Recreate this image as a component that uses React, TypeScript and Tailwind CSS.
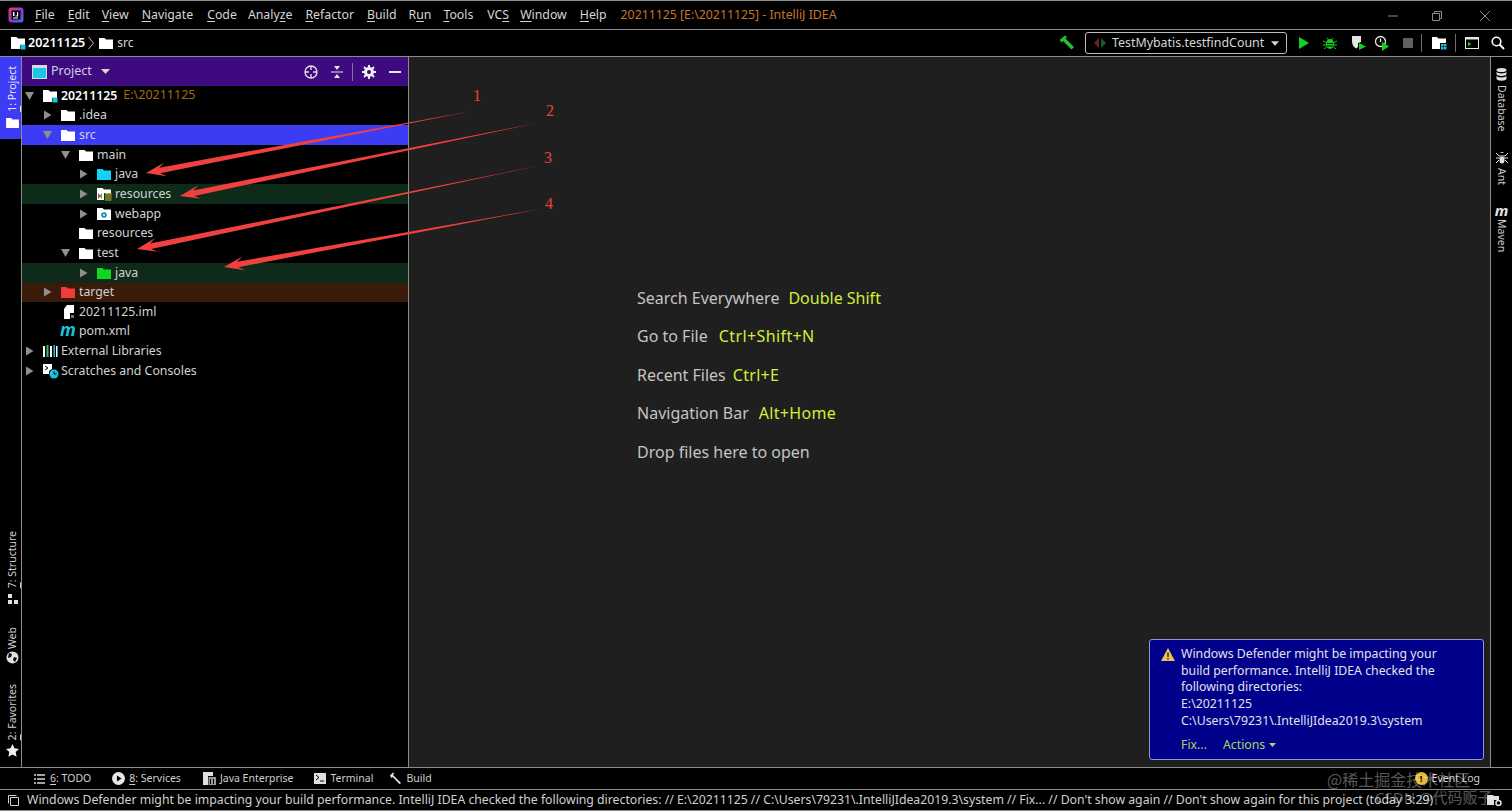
import type { ReactNode } from "react";

const FONT = "font-['Noto_Sans','Open_Sans',sans-serif]";

function Folder({ color = "#ffffff", className = "" }: { color?: string; className?: string }) {
  return (
    <svg viewBox="0 0 14 12" width="14" height="12" className={className}>
      <path d="M0 1h5.500l1.500 1.600H14V12H0z" fill={color} />
    </svg>
  );
}

function ModuleFolder() {
  return (
    <svg viewBox="0 0 15 14" width="15" height="14">
      <path d="M0 1h5.500l1.500 1.600H14V9H9v4H0z" fill="#fff" />
      <rect x="9.500" y="8.500" width="5" height="5" fill="#19c3dc" />
    </svg>
  );
}

function Twisty({ open }: { open: boolean }) {
  return (
    <svg viewBox="0 0 10 10" width="10" height="10" className="ml-[1px]">
      {open ? <path d="M0 1h9L4.500 9z" fill="#8f8f8f" /> : <path d="M1 0.500v9L8.500 5z" fill="#8f8f8f" />}
    </svg>
  );
}

const Mnemonic = ({ pre = "", k, post = "" }: { pre?: string; k: string; post?: string }) => (
  <span>
    {pre}
    <span className="underline underline-offset-2">{k}</span>
    {post}
  </span>
);

const menus: [string, string, string, string][] = [
  ["", "F", "ile", "ml-[11px]"],
  ["", "E", "dit", "ml-[13px]"],
  ["", "V", "iew", "ml-[12px]"],
  ["", "N", "avigate", "ml-[13px]"],
  ["", "C", "ode", "ml-[14px]"],
  ["Analy", "z", "e", "ml-[11px]"],
  ["", "R", "efactor", "ml-[13px]"],
  ["", "B", "uild", "ml-[13px]"],
  ["R", "u", "n", "ml-[12px]"],
  ["", "T", "ools", "ml-[12px]"],
  ["VC", "S", "", "ml-[14px]"],
  ["", "W", "indow", "ml-[11px]"],
  ["", "H", "elp", "ml-[13px]"],
];

function MenuBar() {
  return (
    <div className="flex h-[28px] shrink-0 items-center bg-black pl-[8px] pt-[1px] text-[12.300px] text-[#d6d6d6]">
      <svg viewBox="0 0 16 16" width="16" height="16" className="mb-[2px]">
        <defs>
          <linearGradient id="ij" x1="0" y1="0" x2="1" y2="1">
            <stop offset="0" stopColor="#f0326e" />
            <stop offset="0.600" stopColor="#7b3fd8" />
            <stop offset="1" stopColor="#2f7be0" />
          </linearGradient>
        </defs>
        <rect x="0.500" y="0.500" width="15" height="15" rx="3" fill="url(#ij)" />
        <rect x="3.500" y="3.500" width="9" height="9" fill="#000" />
        <rect x="5" y="10.500" width="5" height="1" fill="#fff" />
        <rect x="5" y="5" width="1.500" height="4" fill="#fff" />
        <path d="M7.500 8.500h1.500V5h1.200v4.500H7.500z" fill="#fff" />
      </svg>
      {menus.map(([pre, k, post, ml]) => (
        <span key={k + post} className={ml}>
          <Mnemonic pre={pre} k={k} post={post} />
        </span>
      ))}
      <span className="ml-[14px] text-[#c4762c]">20211125 [E:\20211125] - IntelliJ IDEA</span>
      <div className="ml-auto flex items-center text-[#8a8a8a]">
        <svg width="12" height="12" viewBox="0 0 12 12"><path d="M1 6h10" stroke="currentColor" /></svg>
        <svg width="12" height="12" viewBox="0 0 12 12" className="ml-[32px]">
          <path d="M1.500 3.500h7v7h-7zM3.500 3.500v-2h7v7h-2" stroke="currentColor" fill="none" />
        </svg>
        <svg width="12" height="12" viewBox="0 0 12 12" className="ml-[36px] mr-[21px]">
          <path d="M1 1l10 10M11 1L1 11" stroke="currentColor" />
        </svg>
      </div>
    </div>
  );
}

function NavBar() {
  return (
    <div className="flex h-[28px] shrink-0 items-center border-y border-[#8c8c8c] bg-black pl-[11px] text-[#d6d6d6]">
      <ModuleFolder />
      <span className="ml-[2px] text-[12.500px] font-semibold text-white">20211125</span>
      <svg width="6" height="14" viewBox="0 0 6 14" className="ml-[3px]">
        <path d="M0.500 1l5 6-5 6" stroke="#bdbdbd" fill="none" />
      </svg>
      <Folder className="ml-[5px]" />
      <span className="ml-[4px] text-[12px]">src</span>
      <div className="ml-auto flex items-center">
        <svg width="16" height="16" viewBox="0 0 16 16">
          <path d="M0.500 5L6 0.500l2 1.500-1.500 1.500L15 12l-2.500 2.500L4 6 2.500 7.500z" fill="#22c02a" />
        </svg>
        <div className="ml-[10px] flex h-[22px] w-[202px] items-center rounded-[3px] border border-[#bcbcbc] pl-[8px]">
          <svg width="12" height="10" viewBox="0 0 12 10">
            <path d="M5 0v10L0 5z" fill="#6e1f1f" />
            <path d="M7 0v10l5-5z" fill="#155c2a" />
          </svg>
          <span className="ml-[6px] text-[12.400px]">TestMybatis.testfindCount</span>
          <svg width="8" height="5" viewBox="0 0 9 5" className="ml-auto mr-[7px]"><path d="M0 0h9L4.500 5z" fill="#d6d6d6" /></svg>
        </div>
        <svg width="12" height="12" viewBox="0 0 12 12" className="ml-[11px]"><path d="M1 0v12l10-6z" fill="#14d01e" /></svg>
        <svg width="14" height="14" viewBox="0 0 14 14" className="ml-[13px]">
          <ellipse cx="7" cy="8" rx="4" ry="5" fill="#14d01e" />
          <path d="M0 5l3 1.500M14 5l-3 1.500M0 9h3M14 9h-3M1 13l2.500-2M13 13l-2.500-2M4 2l1.500 2M10 2L8.500 4" stroke="#14d01e" />
          <path d="M4 7.500h6M4 10h6" stroke="#000" />
        </svg>
        <svg width="16" height="16" viewBox="0 0 16 16" className="ml-[14px]">
          <path d="M1 1h9v6l-3 1v4l-2 1.500C2 12 1 9 1 6z" fill="#e6e6e6" />
          <path d="M8 8v7l7-3.500z" fill="#14d01e" />
        </svg>
        <svg width="17" height="17" viewBox="0 0 17 17" className="ml-[7px]">
          <circle cx="6.500" cy="6.500" r="5" stroke="#e6e6e6" strokeWidth="1.300" fill="none" />
          <path d="M6.500 3.500v3.500" stroke="#e6e6e6" strokeWidth="1.300" />
          <path d="M8 7v9l7-4.500z" fill="#14d01e" />
        </svg>
        <div className="ml-[12px] h-[10px] w-[10px] bg-[#5f5f5f]" />
        <div className="ml-[8px] h-[18px] w-px bg-[#6e6e6e]" />
        <svg width="15" height="14" viewBox="0 0 15 14" className="ml-[10px]">
          <path d="M0 1h5l1.500 1.600H14V7H8v6H0z" fill="#fff" />
          <rect x="9" y="8" width="2.500" height="2.500" fill="#19c3dc" />
          <rect x="12" y="8" width="2.500" height="2.500" fill="#19c3dc" />
          <rect x="9" y="11" width="2.500" height="2.500" fill="#19c3dc" />
          <rect x="12" y="11" width="2.500" height="2.500" fill="#19c3dc" />
        </svg>
        <div className="ml-[8px] h-[18px] w-px bg-[#6e6e6e]" />
        <svg width="14" height="12" viewBox="0 0 14 12" className="ml-[9px]">
          <rect x="0.500" y="0.500" width="13" height="11" fill="none" stroke="#e6e6e6" />
          <rect x="0.500" y="0.500" width="13" height="2" fill="#e6e6e6" />
          <path d="M3 5v4l3.500-2z" fill="#14d01e" />
        </svg>
        <svg width="14" height="14" viewBox="0 0 14 14" className="ml-[12px] mr-[7px]">
          <circle cx="5.500" cy="5.500" r="4.300" fill="none" stroke="#fff" strokeWidth="1.600" />
          <path d="M8.500 8.500L13 13" stroke="#fff" strokeWidth="2" />
        </svg>
      </div>
    </div>
  );
}

function VText({ children, dir = "up" }: { children: ReactNode; dir?: "up" | "down" }) {
  return (
    <span
      className={
        dir === "up"
          ? "block rotate-180 text-[10.500px] leading-none [writing-mode:vertical-rl]"
          : "block text-[10.500px] leading-none [writing-mode:vertical-rl]"
      }
    >
      {children}
    </span>
  );
}

function LeftStrip() {
  return (
    <div className="flex w-[22px] shrink-0 flex-col justify-between border-r border-[#8c8c8c] bg-black text-[#d0d0d0]">
      <div className="flex h-[82px] flex-col items-center justify-end bg-[#3c3cf5] pb-[11px] pl-[3px] text-[#e6e6f0]">
        <VText>
          <Mnemonic k="1" post=": Project" />
        </VText>
        <Folder className="mt-[5px] h-[11px] w-[13px]" />
      </div>
      <div className="flex flex-col items-center pb-[10px] pl-[4px]">
        <VText>
          <Mnemonic k="7" post=": Structure" />
        </VText>
        <svg width="12" height="12" viewBox="0 0 12 12" className="mt-[4px]">
          <path d="M1 1h4v4H1zM1 7h4v4H1zM7 7h4v4H7z" fill="#e0e0e0" />
        </svg>
        <div className="mt-[22px]"><VText>Web</VText></div>
        <svg width="13" height="13" viewBox="0 0 13 13" className="mt-[2px]">
          <circle cx="6.500" cy="6.500" r="6" fill="#e0e0e0" />
          <path d="M3 2l3 1-1 3-3 1zM8 6l3 1-2 4-2-2z" fill="#000" />
        </svg>
        <div className="mt-[20px]">
          <VText>
            <Mnemonic k="2" post=": Favorites" />
          </VText>
        </div>
        <svg width="13" height="13" viewBox="0 0 13 13" className="mt-[4px]">
          <path d="M6.500 0l2 4.300 4.500.6-3.300 3.100.9 4.700-4.100-2.300-4.100 2.300.9-4.700L0 4.900l4.500-.6z" fill="#f0f0f0" />
        </svg>
      </div>
    </div>
  );
}

type Row = { label: string; depth: string; twisty?: "open" | "closed"; icon: ReactNode; bg?: string; hint?: string; bold?: boolean };

const rows: Row[] = [
  { label: "20211125", depth: "pl-[2px]", twisty: "open", icon: <ModuleFolder />, hint: "E:\\20211125", bold: true },
  { label: ".idea", depth: "pl-[20px]", twisty: "closed", icon: <Folder /> },
  { label: "src", depth: "pl-[20px]", twisty: "open", icon: <Folder />, bg: "bg-[#3c3cf5]" },
  { label: "main", depth: "pl-[38px]", twisty: "open", icon: <Folder /> },
  { label: "java", depth: "pl-[56px]", twisty: "closed", icon: <Folder color="#10d4f4" /> },
  {
    label: "resources",
    depth: "pl-[56px]",
    twisty: "closed",
    bg: "bg-[#0e2b1a]",
    icon: (
      <svg viewBox="0 0 15 14" width="15" height="14">
        <path d="M0 1h5.500L7 2.600h7V6H7v7H0z" fill="#fff" />
        <path d="M1 6l3 3-3 3z" fill="#e04030" />
        <path d="M5 6L3 9l2 3z" fill="#18b040" />
        <path d="M8 6h6.500v7.500H8z" fill="#b8b040" />
        <path d="M8 8h6.500M8 10h6.500M8 12h6.500" stroke="#000" strokeWidth="0.700" />
      </svg>
    ),
  },
  {
    label: "webapp",
    depth: "pl-[56px]",
    twisty: "closed",
    icon: (
      <svg viewBox="0 0 14 12" width="14" height="12">
        <path d="M0 0h5.500L7 1.600h7V12H0z" fill="#fff" />
        <circle cx="7" cy="7" r="2.800" fill="#1090b0" />
        <circle cx="7" cy="7" r="1" fill="#fff" />
      </svg>
    ),
  },
  { label: "resources", depth: "pl-[38px]", icon: <Folder /> },
  { label: "test", depth: "pl-[38px]", twisty: "open", icon: <Folder /> },
  { label: "java", depth: "pl-[56px]", twisty: "closed", icon: <Folder color="#10d820" />, bg: "bg-[#0e2b1a]" },
  { label: "target", depth: "pl-[20px]", twisty: "closed", icon: <Folder color="#f03c3c" />, bg: "bg-[#3a1a08]" },
  {
    label: "20211125.iml",
    depth: "pl-[20px]",
    icon: (
      <svg viewBox="0 0 12 14" width="12" height="14" className="ml-[2px]">
        <path d="M4 0h7v8H7v6H1V4z" fill="#fff" />
        <rect x="8" y="10" width="3" height="3" fill="#777" />
      </svg>
    ),
  },
  {
    label: "pom.xml",
    depth: "pl-[20px]",
    icon: <span className="-ml-[1px] -mt-[4px] text-[17.500px] font-bold italic leading-none text-[#19c3dc]">m</span>,
  },
  {
    label: "External Libraries",
    depth: "pl-[2px]",
    twisty: "closed",
    icon: (
      <svg viewBox="0 0 15 12" width="15" height="12">
        <path d="M0 1h2v11H0z" fill="#fff" />
        <path d="M3.500 0h2v12h-2z" fill="#2bc45a" />
        <path d="M7 1h2v11H7z" fill="#fff" />
        <path d="M10.500 0h1.500v12h-1.500z" fill="#19c3dc" />
        <path d="M13 1h1.500v11H13z" fill="#fff" />
      </svg>
    ),
  },
  {
    label: "Scratches and Consoles",
    depth: "pl-[2px]",
    twisty: "closed",
    icon: (
      <svg viewBox="0 0 16 15" width="16" height="15">
        <path d="M0 0h9v5l-3 2v3H0z" fill="#fff" />
        <path d="M2 2l3 2-3 2" stroke="#000" fill="none" />
        <circle cx="11" cy="10" r="4.500" fill="#19c3dc" />
        <path d="M11 7.500V10h2.500" stroke="#000" fill="none" />
      </svg>
    ),
  },
];

function ProjectTree() {
  return (
    <div className="flex w-[387px] shrink-0 flex-col border-r border-[#8c8c8c] bg-black">
      <div className="flex h-[29px] shrink-0 items-center bg-[#3e0a80] pl-[10px] text-[#d6d6d6]">
        <svg width="15" height="14" viewBox="0 0 15 14">
          <rect x="0.500" y="0.500" width="14" height="13" fill="#19c8e6" stroke="#d8d8e8" />
          <rect x="0.500" y="0.500" width="14" height="2.500" fill="#d8d8e8" />
        </svg>
        <span className="ml-[4px] text-[12.500px] text-[#d0d0e0]">Project</span>
        <svg width="9" height="5" viewBox="0 0 9 5" className="ml-[9px]"><path d="M0 0h9L4.500 5z" fill="#d6d6d6" /></svg>
        <div className="ml-auto flex items-center">
          <svg width="14" height="14" viewBox="0 0 14 14">
            <circle cx="7" cy="7" r="6" fill="none" stroke="#e6e6e6" strokeWidth="1.300" />
            <path d="M7 1v4M7 9v4M1 7h4M9 7h4" stroke="#e6e6e6" strokeWidth="1.300" />
          </svg>
          <svg width="12" height="14" viewBox="0 0 12 14" className="ml-[13px]">
            <path d="M0 7h12" stroke="#e6e6e6" />
            <path d="M3 1h6L6 5zM3 13h6L6 9z" fill="#e6e6e6" />
          </svg>
          <div className="ml-[9px] h-[18px] w-px bg-[#8070a8]" />
          <svg width="14" height="14" viewBox="0 0 14 14" className="ml-[9px]">
            <circle cx="7" cy="7" r="3.500" fill="none" stroke="#f0f0f0" strokeWidth="3" />
            <path d="M7 0v3M7 11v3M0 7h3M11 7h3M2 2l2 2M10 10l2 2M12 2l-2 2M4 10l-2 2" stroke="#f0f0f0" strokeWidth="2" />
          </svg>
          <div className="ml-[13px] mr-[7px] h-[2px] w-[12px] bg-[#e6e6e6]" />
        </div>
      </div>
      {rows.map((r) => (
        <div key={r.label + r.depth} className={`flex h-[19.670px] items-center text-[12.300px] ${r.depth} ${r.bg ?? ""}`}>
          <div className="flex w-[19px] shrink-0 items-center">{r.twisty && <Twisty open={r.twisty === "open"} />}</div>
          <div className="flex w-[18px] shrink-0 items-center">{r.icon}</div>
          <span className={r.bold ? "font-semibold text-white" : "text-[#d2d2d2]"}>{r.label}</span>
          {r.hint && <span className="ml-[6px] text-[12.500px] text-[#a8661c]">{r.hint}</span>}
        </div>
      ))}
    </div>
  );
}

const hints: { label: string; keys?: string; cls?: string }[] = [
  { label: "Search Everywhere", keys: "Double Shift", cls: "ml-[9px]" },
  { label: "Go to File", keys: "Ctrl+Shift+N", cls: "ml-[11px] tracking-[0.400px]" },
  { label: "Recent Files", keys: "Ctrl+E", cls: "ml-[7px] tracking-[0.300px]" },
  { label: "Navigation Bar", keys: "Alt+Home", cls: "ml-[10px] tracking-[0.300px]" },
  { label: "Drop files here to open" },
];

function Notification() {
  return (
    <div className="absolute bottom-[7px] right-[6px] h-[121px] w-[335px] rounded-[3px] border border-[#8f96d0] bg-[#00008a] pl-[31px] pt-[6px] text-[12.300px] leading-[16.700px] text-[#e2e2ea]">
      <svg width="14" height="13" viewBox="0 0 14 13" className="absolute left-[11px] top-[8px]">
        <path d="M7 0l7 13H0z" fill="#f0c050" />
        <path d="M7 4.500v4.500M7 10v1.500" stroke="#222" strokeWidth="1.400" />
      </svg>
      <p>Windows Defender might be impacting your</p>
      <p>build performance. IntelliJ IDEA checked the</p>
      <p>following directories:</p>
      <p>E:\20211125</p>
      <p>C:\Users\79231\.IntelliJIdea2019.3\system</p>
      <div className="mt-[7px] flex items-center text-[#a8d860]">
        <span>Fix...</span>
        <span className="ml-[16px]">Actions</span>
        <svg width="7" height="4" viewBox="0 0 7 4" className="ml-[4px]"><path d="M0 0h7L3.500 4z" fill="#a8d860" /></svg>
      </div>
    </div>
  );
}

function Editor() {
  return (
    <div className="relative flex min-w-0 flex-1 flex-col gap-[17px] bg-[#1f1f1f] pl-[228px] pt-[230px]">
      {hints.map((h) => (
        <div key={h.label} className="flex h-[21.500px] items-center text-[16px] leading-none text-[#c4c4c4]">
          <span>{h.label}</span>
          {h.keys && <span className={`text-[#d2ee3a] ${h.cls}`}>{h.keys}</span>}
        </div>
      ))}
      <Notification />
    </div>
  );
}

function RightStrip() {
  return (
    <div className="flex w-[22px] shrink-0 flex-col items-center border-l border-[#8c8c8c] bg-black pt-[11px] text-[#cfcfcf]">
      <svg width="11" height="13" viewBox="0 0 11 13">
        <ellipse cx="5.500" cy="2" rx="5" ry="2" fill="#e0e0e0" />
        <path d="M0.500 3.500c0 2.600 10 2.600 10 0V6c0 2.600-10 2.600-10 0zM0.500 7.500c0 2.600 10 2.600 10 0V10.500c0 3-10 3-10 0z" fill="#e0e0e0" />
      </svg>
      <div className="mt-[4px]"><VText dir="down">Database</VText></div>
      <svg width="12" height="13" viewBox="0 0 12 13" className="mt-[19px]">
        <circle cx="6" cy="3" r="2" fill="#e0e0e0" />
        <ellipse cx="6" cy="9" rx="2.500" ry="3.500" fill="#e0e0e0" />
        <path d="M0 2l3 3h6l3-3M0 7h12M0 12l3-3M12 12l-3-3" stroke="#e0e0e0" />
      </svg>
      <div className="mt-[4px]"><VText dir="down">Ant</VText></div>
      <span className="mt-[18px] text-[15px] font-bold italic leading-none text-[#e6e6e6]">m</span>
      <div className="mt-[1px]"><VText dir="down">Maven</VText></div>
    </div>
  );
}

function ToolTabs() {
  return (
    <div className="flex h-[22px] shrink-0 items-center border-t border-[#8c8c8c] bg-black pl-[34px] text-[10.500px] text-[#cfcfcf]">
      <svg width="11" height="10" viewBox="0 0 11 10">
        <path d="M0 1h2M0 5h2M0 9h2M3 1h8M3 5h8M3 9h8" stroke="#d8d8d8" strokeWidth="1.400" />
      </svg>
      <span className="ml-[5px]"><Mnemonic k="6" post=": TODO" /></span>
      <svg width="13" height="13" viewBox="0 0 13 13" className="ml-[21px]">
        <circle cx="6.500" cy="6.500" r="6.500" fill="#e6e6e6" />
        <path d="M5 3.500v6l4.500-3z" fill="#000" />
      </svg>
      <span className="ml-[4px]"><Mnemonic k="8" post=": Services" /></span>
      <svg width="13" height="13" viewBox="0 0 13 13" className="ml-[22px]">
        <path d="M0 0h10v4H5v9H0z" fill="#e0e0e0" />
        <rect x="5.500" y="5" width="7.500" height="8" fill="#9a9a9a" />
        <path d="M7.500 7v5M10.500 7v5" stroke="#000" />
      </svg>
      <span className="ml-[4px]">Java Enterprise</span>
      <svg width="12" height="11" viewBox="0 0 12 11" className="ml-[21px]">
        <rect width="12" height="11" fill="#e0e0e0" />
        <path d="M2 2l3 2.500L2 7M6 8h4" stroke="#000" fill="none" />
      </svg>
      <span className="ml-[4px]">Terminal</span>
      <svg width="13" height="13" viewBox="0 0 13 13" className="ml-[17px]">
        <path d="M0 3.500l3-3 1.200 1L3 3l8 8-1.300 1.300-7-7.300-1.400 1z" fill="#e0e0e0" />
      </svg>
      <span className="ml-[3px]">Build</span>
      <div className="ml-auto mr-[32px] flex items-center">
        <div className="flex h-[13px] w-[13px] items-center justify-center rounded-full bg-[#e8b830] text-[9px] font-bold text-black">!</div>
        <span className="ml-[4px]">Event Log</span>
      </div>
    </div>
  );
}

function StatusBar() {
  return (
    <div className="flex h-[22px] shrink-0 items-center border-y border-[#8c8c8c] bg-black pl-[8px] text-[12.250px] text-[#d0d0d0]">
      <svg width="11" height="11" viewBox="0 0 11 11">
        <path d="M2.500 2.500h8v8h-8zM0.500 8.500v-8h8" fill="none" stroke="#d0d0d0" />
      </svg>
      <span className="ml-[8px] whitespace-nowrap">
        {"Windows Defender might be impacting your build performance. IntelliJ IDEA checked the following directories: // E:\\20211125 // C:\\Users\\79231\\.IntelliJIdea2019.3\\system // Fix... // Don't show again // Don't show again for this project (today 3:29)"}
      </span>
      <svg width="16" height="14" viewBox="0 0 16 14" className="ml-auto mr-[9px]">
        <path d="M0 2h6l1 1h5v4H7v5H0z" fill="#e0e0e0" />
        <circle cx="11.500" cy="10" r="2.500" fill="none" stroke="#e0e0e0" strokeWidth="1.500" />
      </svg>
    </div>
  );
}

// tail -> tip polygon, thin at the tail, widening up to the head
function arrowPoints(x1: number, y1: number, x2: number, y2: number) {
  const len = Math.hypot(x2 - x1, y2 - y1);
  const ux = (x2 - x1) / len;
  const uy = (y2 - y1) / len;
  const at = (d: number, w: number) => `${x2 - ux * d - uy * w},${y2 - uy * d + ux * w}`;
  return [`${x1},${y1}`, at(14, 2.800), at(20, 7), `${x2},${y2}`, at(20, -7), at(14, -2.800)].join(" ");
}

const arrows = [
  [472, 110, 146, 172],
  [537, 122, 180, 195],
  [537, 165, 137, 248],
  [540, 208, 224, 266],
];

const labels: [string, string][] = [
  ["1", "left-[473px] top-[85px]"],
  ["2", "left-[546px] top-[100px]"],
  ["3", "left-[544px] top-[147px]"],
  ["4", "left-[545px] top-[193px]"],
];

function Annotations() {
  return (
    <>
      <svg width="1512" height="811" viewBox="0 0 1512 811" className="pointer-events-none absolute inset-0">
        {arrows.map(([a, b, c, d]) => (
          <polygon key={a + "-" + b} points={arrowPoints(a, b, c, d)} fill="#f04040" />
        ))}
      </svg>
      {labels.map(([n, pos]) => (
        <span key={n} className={`absolute font-['Liberation_Serif',serif] text-[16px] leading-[20px] text-[#e84040] ${pos}`}>
          {n}
        </span>
      ))}
      <span className="absolute left-[1327px] top-[767px] font-['Noto_Sans_CJK_SC',sans-serif] text-[16px] leading-[22px] text-white/35">
        @稀土掘金技术社区
      </span>
      <span className="absolute left-[1375px] top-[785px] font-['Noto_Sans','Noto_Sans_CJK_SC',sans-serif] text-[15px] leading-[22px] text-white/35">
        CSDN @代码贩子
      </span>
    </>
  );
}

export default function App() {
  return (
    <div className={`relative flex h-[811px] w-[1512px] flex-col overflow-hidden border-t border-[#8c8c8c] bg-black ${FONT}`}>
      <MenuBar />
      <NavBar />
      <div className="flex min-h-0 flex-1">
        <LeftStrip />
        <ProjectTree />
        <Editor />
        <RightStrip />
      </div>
      <ToolTabs />
      <StatusBar />
      <Annotations />
    </div>
  );
}
